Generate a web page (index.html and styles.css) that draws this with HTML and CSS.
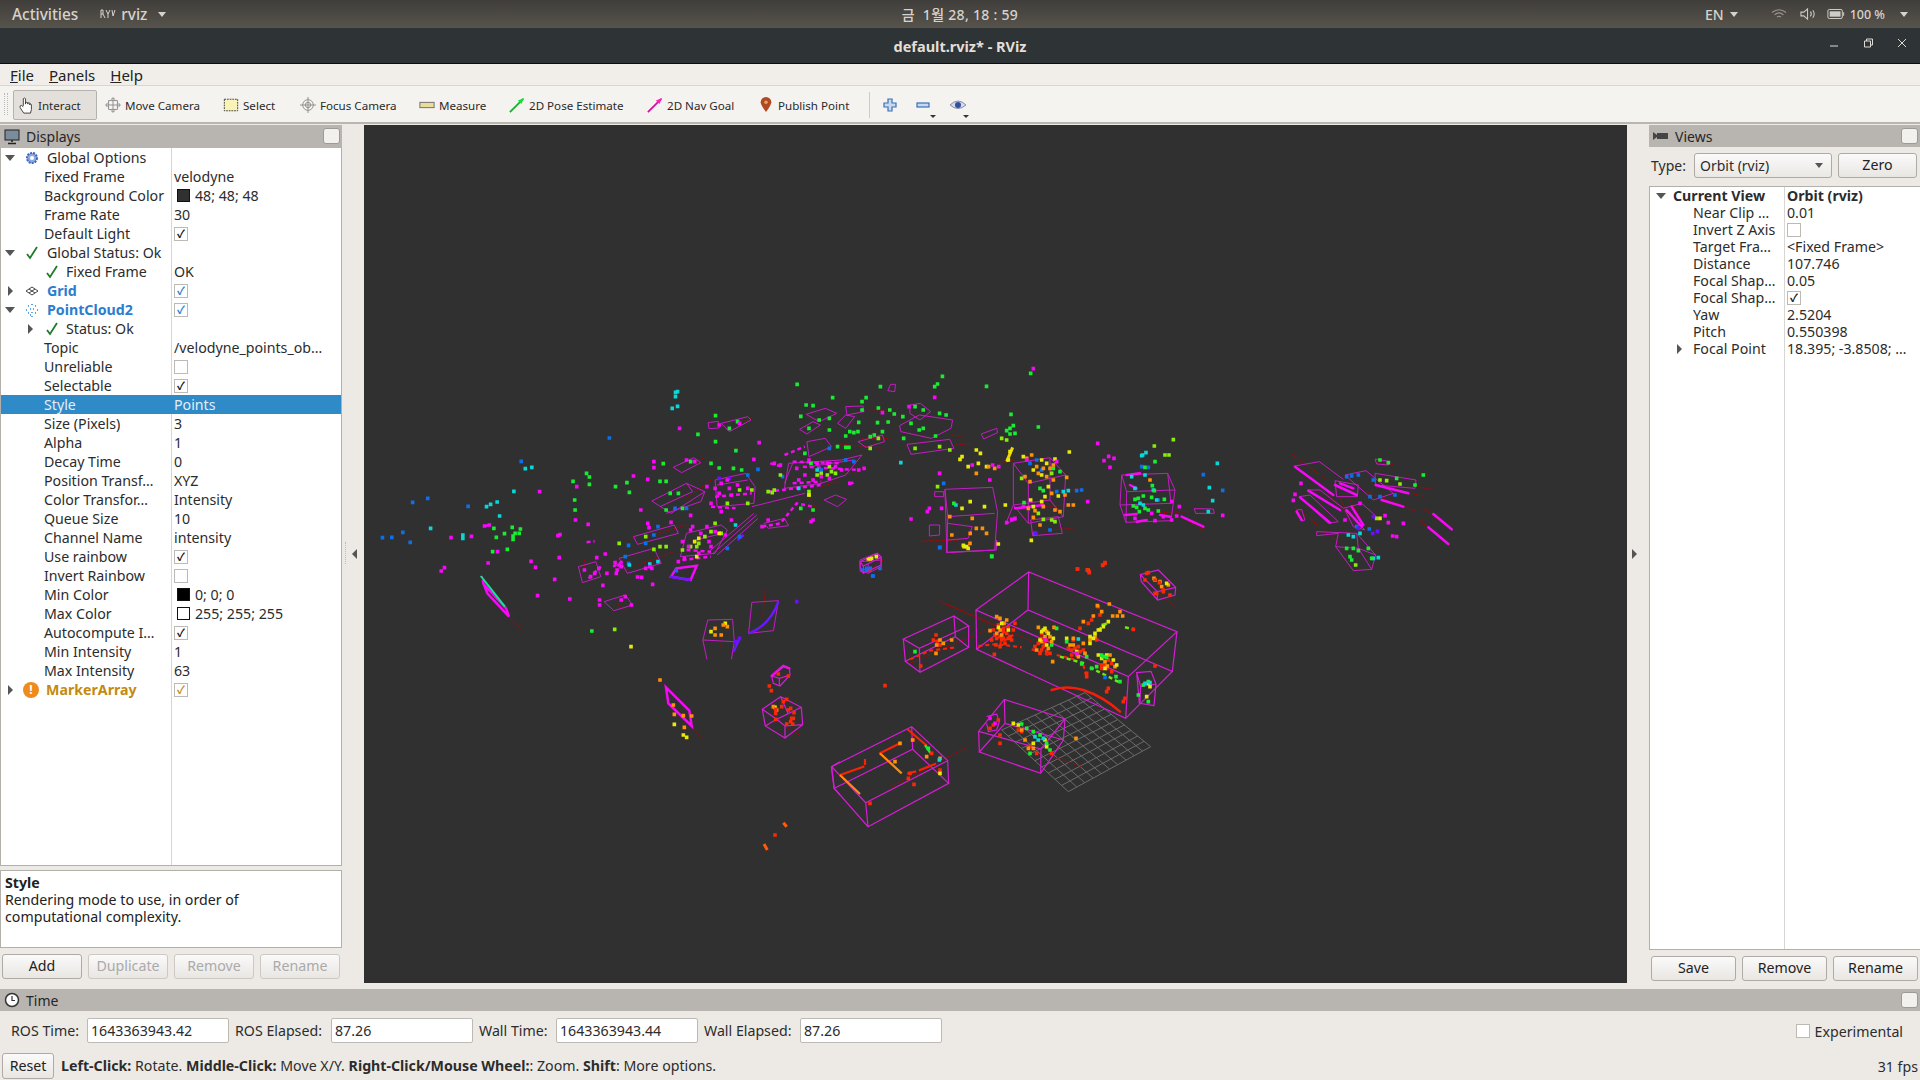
FILE: index.html
```html
<!DOCTYPE html>
<html lang="en">
<head>
<meta charset="utf-8">
<title>default.rviz* - RViz</title>
<link rel="stylesheet" href="styles.css">
</head>
<body>
<div class="screen">
  <header class="topbar">
    <div class="top-left"><span class="act">Activities</span><span class="app"><svg class="app-ico" viewBox="0 0 16 10"><path d="M1 1v8M1 1h2v4H1M3 5l2 4M6 1l2 4 2-4M8 5v4M12 1l1 6 2-6" /></svg>rviz<i class="caret"></i></span></div>
    <div class="clock">금 &nbsp;1월 28, 18 : 59</div>
    <div class="top-right">
      <span class="lang">EN<i class="caret"></i></span>
      <svg class="tray wifi" viewBox="0 0 16 12"><path d="M1 4.500Q8-1 15 4.500M3.500 6.800Q8 3 12.500 6.800M6 9Q8 7.500 10 9"/></svg>
      <svg class="tray vol" viewBox="0 0 18 14"><path d="M1 5h3l4-3.500v11L4 9H1zM11 4.500q2 2.500 0 5M13.500 3q3 4 0 8"/></svg>
      <svg class="tray bat" viewBox="0 0 20 12"><rect x="1" y="1" width="16" height="10" rx="1.500"/><rect class="bat-fill" x="3" y="3" width="12" height="6"/><path d="M18.500 4v4"/></svg>
      <span class="pct">100 %</span><i class="caret"></i>
    </div>
  </header>
  <div class="titlebar">
    <span>default.rviz* - RViz</span>
    <div class="win-btns">
      <svg viewBox="0 0 12 12"><path d="M2 9h8"/></svg>
      <svg viewBox="0 0 12 12"><path d="M2.500 4h6v6h-6zM4.500 4V2h6v6H8.500"/></svg>
      <svg viewBox="0 0 12 12"><path d="M2 2l8 8M10 2l-8 8"/></svg>
    </div>
  </div>
  <nav class="menubar"><span><u>F</u>ile</span><span><u>P</u>anels</span><span><u>H</u>elp</span></nav>
  <div class="toolbar">
    <div class="grip"></div>
    <div class="tools">
      <div class="tool active"><svg viewBox="0 0 16 20"><path class="ln" d="M5 11V3q1.300-1.500 2.500 0v6-1.500q1.300-1 2.500 0V9 8q1.200-.8 2.300 0v2-1q1-.5 1.700.5V15l-1 4H5.500L1.500 13v-2q1.500-1.500 3.500 1"/></svg><span>Interact</span></div>
      <div class="tool"><svg viewBox="0 0 18 18"><path class="ln2" d="M9 1v16M1 9h16M4 4h10v10H4zM6.500 3L9 .800 11.500 3M6.500 15L9 17.200 11.500 15M3 6.500L.800 9 3 11.500M15 6.500L17.200 9 15 11.500"/></svg><span>Move Camera</span></div>
      <div class="tool"><svg viewBox="0 0 18 18"><rect class="sel" x="1.500" y="2.500" width="15" height="13"/></svg><span>Select</span></div>
      <div class="tool"><svg viewBox="0 0 18 18"><circle class="ln2" cx="9" cy="9" r="6"/><circle class="ln2" cx="9" cy="9" r="3"/><path class="ln2" d="M9 0v18M0 9h18"/></svg><span>Focus Camera</span></div>
      <div class="tool"><svg viewBox="0 0 18 18"><rect class="ruler" x="1" y="6" width="16" height="6"/></svg><span>Measure</span></div>
      <div class="tool"><svg viewBox="0 0 18 18"><path class="arrow-g" d="M1 17L16 2"/><path class="tip-g" d="M17 1l-7 3 4 4z"/></svg><span>2D Pose Estimate</span></div>
      <div class="tool"><svg viewBox="0 0 18 18"><path class="arrow-m" d="M1 17L16 2"/><path class="tip-m" d="M17 1l-7 3 4 4z"/></svg><span>2D Nav Goal</span></div>
      <div class="tool"><svg viewBox="0 0 18 18"><path class="pin" d="M9 17Q3 9 3 6a6 6 0 0 1 12 0q0 3-6 11z"/><circle class="pin-dot" cx="9" cy="6" r="2"/></svg><span>Publish Point</span></div>
      <div class="tool-sep"></div>
      <div class="tool-ico"><svg viewBox="0 0 14 14"><path class="plus" d="M5 1h4v4h4v4H9v4H5V9H1V5h4z"/></svg></div>
      <div class="tool-ico"><svg viewBox="0 0 14 14"><rect class="plus" x="1" y="5" width="12" height="4"/></svg><i class="mini"></i></div>
      <div class="tool-ico"><svg class="eye-ico" viewBox="0 0 18 14"><path class="eye" d="M1 7q8-8 16 0-8 7-16 0z"/><circle class="pupil" cx="9" cy="7" r="3"/></svg><i class="mini"></i></div>
    </div>
  </div>

  <main class="workspace">
    <section class="left">
      <div class="dock-title"><svg class="dock-ico" viewBox="0 0 16 16"><rect class="mon" x="1" y="1" width="14" height="10"/><path class="mon-b" d="M8 11v2M4 14.500h8"/></svg><span>Displays</span><i class="dock-btn"></i></div>
      <div class="tree">
        <div class="row"><div class="name n0"><i class="tri down"></i><svg class="ico" viewBox="0 0 14 14"><circle class="gear" cx="7" cy="7" r="5"/><circle class="gear-in" cx="7" cy="7" r="2"/></svg>Global Options</div><div class="val"></div></div>
        <div class="row"><div class="name n1">Fixed Frame</div><div class="val">velodyne</div></div>
        <div class="row"><div class="name n1">Background Color</div><div class="val"><i class="swatch bg48"></i>48; 48; 48</div></div>
        <div class="row"><div class="name n1">Frame Rate</div><div class="val">30</div></div>
        <div class="row"><div class="name n1">Default Light</div><div class="val"><i class="cb on">✓</i></div></div>
        <div class="row"><div class="name n0"><i class="tri down"></i><svg class="ico" viewBox="0 0 14 14"><path class="chk" d="M2 8l3 4 7-11"/></svg>Global Status: Ok</div><div class="val"></div></div>
        <div class="row"><div class="name n2"><svg class="ico" viewBox="0 0 14 14"><path class="chk" d="M2 8l3 4 7-11"/></svg>Fixed Frame</div><div class="val">OK</div></div>
        <div class="row"><div class="name n0 blue"><i class="tri right"></i><svg class="ico" viewBox="0 0 14 14"><path class="griddia" d="M7 3l6 4-6 4-6-4zM4 5l6 4M10 5l-6 4"/></svg>Grid</div><div class="val"><i class="cb on tint">✓</i></div></div>
        <div class="row"><div class="name n0 blue"><i class="tri down"></i><svg class="ico" viewBox="0 0 14 14"><path class="cloud" d="M7 1v1M3 3h1M10 3h1M1 7h1M5 6h1M8 6h1M12 7h1M3 10h1M7 9v1M10 10h1M5 12h1M7 13v1"/></svg>PointCloud2</div><div class="val"><i class="cb on tint">✓</i></div></div>
        <div class="row"><div class="name n2 sub"><i class="tri right"></i><svg class="ico" viewBox="0 0 14 14"><path class="chk" d="M2 8l3 4 7-11"/></svg>Status: Ok</div><div class="val"></div></div>
        <div class="row"><div class="name n1">Topic</div><div class="val">/velodyne_points_ob…</div></div>
        <div class="row"><div class="name n1">Unreliable</div><div class="val"><i class="cb"></i></div></div>
        <div class="row"><div class="name n1">Selectable</div><div class="val"><i class="cb on">✓</i></div></div>
        <div class="row selected"><div class="name n1">Style</div><div class="val">Points</div></div>
        <div class="row"><div class="name n1">Size (Pixels)</div><div class="val">3</div></div>
        <div class="row"><div class="name n1">Alpha</div><div class="val">1</div></div>
        <div class="row"><div class="name n1">Decay Time</div><div class="val">0</div></div>
        <div class="row"><div class="name n1">Position Transf…</div><div class="val">XYZ</div></div>
        <div class="row"><div class="name n1">Color Transfor…</div><div class="val">Intensity</div></div>
        <div class="row"><div class="name n1">Queue Size</div><div class="val">10</div></div>
        <div class="row"><div class="name n1">Channel Name</div><div class="val">intensity</div></div>
        <div class="row"><div class="name n1">Use rainbow</div><div class="val"><i class="cb on">✓</i></div></div>
        <div class="row"><div class="name n1">Invert Rainbow</div><div class="val"><i class="cb"></i></div></div>
        <div class="row"><div class="name n1">Min Color</div><div class="val"><i class="swatch black"></i>0; 0; 0</div></div>
        <div class="row"><div class="name n1">Max Color</div><div class="val"><i class="swatch white"></i>255; 255; 255</div></div>
        <div class="row"><div class="name n1">Autocompute I…</div><div class="val"><i class="cb on">✓</i></div></div>
        <div class="row"><div class="name n1">Min Intensity</div><div class="val">1</div></div>
        <div class="row"><div class="name n1">Max Intensity</div><div class="val">63</div></div>
        <div class="row"><div class="name n0 amber"><i class="tri right"></i><i class="warn">!</i>MarkerArray</div><div class="val"><i class="cb on warn-c">✓</i></div></div>
      </div>
      <div class="desc"><b>Style</b><br>Rendering mode to use, in order of<br>computational complexity.</div>
      <div class="btn-row left-btns"><button class="btn">Add</button><button class="btn off">Duplicate</button><button class="btn off">Remove</button><button class="btn off">Rename</button></div>
    </section>

    <div class="split"><i class="split-dots"></i><i class="tri left-t"></i></div>

    <section class="render">
      <svg class="scene" viewBox="364 125 1263 858" preserveAspectRatio="none">
        <g transform="translate(800 540) scale(.33333)">
          <path class="gridln" d="M605 570L805 755M630 559L830 741M655 548L854 728M680 536L879 714M705 525L904 701M730 514L928 687M755 503L953 674M780 492L978 660M805 480L1003 647M830 469L1027 633M855 458L1052 620M605 570L855 458M625 588L875 474M645 607L894 490M665 625L914 507M685 644L934 523M705 662L953 539M725 681L973 555M745 699L993 571M765 718L1013 588M785 736L1032 604M805 755L1052 620"/>
          <path class="dk" d="M418 182L700 305M555 272L330 370M495 625L275 740M745 645L845 680M1075 160L1125 200M360 5L480 0M250 60L200 95"/>
          <path class="bx" d="M528 210L686 96L1131 275L985 410ZM530 328L684 210L1117 394L977 535ZM528 210L530 328M686 96L684 210M1131 275L1117 394M985 410L977 535"/>
          <path class="bx" d="M310 297L462 228L506 258L358 325ZM316 364L466 290L506 322L360 397ZM310 297L316 364M462 228L466 290M506 258L506 322M358 325L360 397"/>
          <path class="bx" d="M95 680L335 560L443 662L197 788ZM103 745L338 628L446 730L204 860ZM95 680L103 745M335 560L338 628M443 662L446 730M197 788L204 860"/>
          <path class="bx" d="M536 574L613 478L795 537L723 627ZM538 636L615 550L790 600L722 700ZM536 574L538 636M613 478L615 550M795 537L790 600M723 627L722 700"/>
          <path class="bx" d="M1010 398L1053 394L1068 432L1062 497L1018 490ZM1010 398L1022 440L1068 432M1022 440L1020 490"/>
          <path class="bx" d="M1021 104L1075 90L1127 142L1125 165L1073 180L1024 125ZM1021 104L1072 155L1127 142M1072 155V180"/>
          <path class="bx" d="M180 65L232 40L244 52L243 75L190 100L182 90ZM180 65L190 78L244 52M190 78V100"/>
          <path class="bx" d="M440 0L440 37L588 30L590 0M560 530L590 522L598 545L590 570L565 575L560 550"/>
          <path class="rl" d="M755 450Q800 435 850 450Q910 470 960 515"/>
          <path class="st-r" d="M120 705L190 680M240 640L300 610M325 570L378 615M360 690L405 672M325 700L345 695M195 660V672"/>
          <path class="st-o" d="M120 705L180 762M240 640L305 700"/>
          <path class="st-g" d="M375 615L392 640"/>
          <path class="st-r dash" d="M535 318L590 312L665 322M695 328L745 345M330 358L390 332L470 322M850 375L860 412M640 285L600 310M770 345L830 360"/>
          <path class="st-l dash" d="M780 350L860 372M870 382L960 428M975 262L1002 268M905 255L925 250M895 270L920 250"/>
          <path class="pt r" d="M595 255h0M610 265h0M620 280h0M590 295h0M605 300h0M630 290h0M615 310h0M640 270h0M580 270h0M575 300h0M600 320h0M635 300h0M645 250h0M625 262h0M588 315h0M583 343h0M408 285h0M412 305h0M400 300h0M420 315h0M362 378h0M255 437h0M833 87h0M867 95h0M908 75h0M915 70h0M342 733h0M210 790h0M580 555h0M595 540h0M570 565h0M600 585h0M600 610h0M655 570h0M665 575h0M690 620h0M710 640h0M755 640h0M925 445h0M920 455h0M975 475h0M970 485h0M1000 268h0M1065 378h0M1045 98h0M1090 155h0M1070 160h0M210 90h0M725 280h0M740 300h0M730 320h0M750 340h0M720 340h0M715 310h0M705 320h0M835 320h0M815 330h0M830 345h0M850 330h0M820 300h0M840 265h0M865 250h0M875 240h0M895 200h0M900 225h0M890 300h0M925 360h0M905 375h0M935 395h0M395 640h0M420 690h0M338 600h0M325 715h0M330 700h0M860 400h0M860 410h0M610 275h0M600 290h0M625 295h0M585 285h0M610 295h0M725 295h0M735 310h0M725 330h0M740 335h0M805 325h0M825 325h0M840 335h0M815 345h0M905 385h0M920 385h0M915 375h0M935 370h0"/>
          <path class="pt o" d="M600 235h0M590 230h0M612 250h0M620 240h0M570 272h0M605 285h0M430 310h0M410 315h0M420 300h0M455 300h0M408 340h0M715 262h0M735 290h0M755 305h0M745 325h0M725 305h0M762 262h0M710 330h0M758 365h0M810 315h0M820 295h0M835 350h0M855 340h0M850 245h0M880 228h0M928 192h0M892 197h0M905 215h0M938 228h0M952 228h0M968 228h0M960 215h0M922 378h0M945 380h0M915 365h0M930 345h0M338 600h0M420 655h0M380 650h0M828 595h0M665 570h0M675 600h0M685 625h0M700 625h0M510 10h0M863 90h0M1062 115h0M1085 140h0M1105 135h0M1080 125h0M285 665h0M300 610h0M600 270h0M590 280h0M740 275h0M750 290h0M850 310h0M870 300h0M885 290h0M820 315h0"/>
          <path class="pt y" d="M605 250h0M595 262h0M625 270h0M730 270h0M745 280h0M720 300h0M760 295h0M800 295h0M830 335h0M870 290h0M885 280h0M900 270h0M910 260h0M925 245h0M870 310h0M895 345h0M920 345h0M915 385h0M950 375h0M940 360h0M420 700h0M1045 430h0M1050 440h0M1040 470h0M1065 120h0M1100 130h0M500 20h0M490 16h0M595 12h0M205 58h0M215 55h0M700 610h0M735 600h0M740 620h0M640 550h0M655 555h0M735 265h0M725 275h0M740 315h0M895 270h0M880 295h0M905 355h0"/>
          <path class="pt g" d="M755 315h0M770 265h0M345 335h0M575 48h0M845 372h0M905 345h0M920 352h0M960 425h0M948 410h0M1045 425h0M1030 435h0M1015 465h0M1045 485h0M385 625h0M665 552h0M680 565h0M720 585h0M750 630h0M690 640h0M800 305h0M860 350h0M890 380h0M875 385h0M910 350h0M740 610h0M700 575h0"/>
          <path class="pt c" d="M835 297h0M418 660h0M705 590h0M1035 430h0M1050 428h0M730 595h0M715 600h0"/>
          <path class="pt b" d="M420 22h0M218 108h0M185 90h0M200 85h0M240 85h0M915 412h0"/>
          <path class="pt m" d="M570 535h0M585 550h0M735 300h0M830 340h0"/>
        </g>
        <g transform="translate(360 360) scale(.40816 .33333)">
          <path class="dk" d="M365 770L394 806M840 295L820 310M960 175L925 190M860 360L800 415M800 495L700 530M770 575L680 615M550 600V620M630 730L655 755M993 688L987 770M885 840L885 875M1430 730L1560 800M1380 543L1495 538M1160 250L1280 265M1230 235L1300 235M1450 225L1478 230M1460 255L1498 250M1190 340L1225 340M1130 380L1170 365M1250 150L1300 150M1100 415L1120 450M1050 490L1070 490"/>
          <path class="bx2" d="M715 423L800 370L845 395L762 460ZM735 440L815 395M800 370L815 395M845 395L835 425L750 460M767 322L818 293L835 308L788 338ZM885 190L950 170L958 180L905 215ZM853 188L878 184L880 204L855 206ZM1093 163L1140 145L1168 160L1125 185ZM1077 208L1110 185L1128 195L1095 222ZM1190 140L1232 138L1235 155L1193 165ZM1170 190L1190 165L1212 170L1190 205ZM1322 197L1370 165L1452 180L1448 205L1400 235L1325 215ZM1348 135L1373 130L1398 155L1372 180L1347 160ZM1340 253L1445 238L1455 265L1350 283ZM1522 222L1560 205L1562 218L1528 237ZM1300 73L1312 73L1310 95L1293 92ZM870 360L945 340L968 380L965 430L875 440ZM1050 310L1180 300L1230 285L1190 345L1130 370L1040 385ZM1095 245L1140 235L1155 260L1100 290ZM1220 245L1280 225L1285 245L1240 262ZM1137 420L1165 405L1192 418L1170 440ZM990 490L1040 475L1050 497L1000 505ZM670 530L770 495L780 520L680 553ZM635 595L720 565L738 610L655 640ZM800 520L885 495L900 510L870 580L785 590ZM820 540L890 520M855 575L965 460M865 580L972 465M875 585L975 475M535 620L578 605L590 650L545 668ZM598 725L650 705L668 735L622 752ZM960 727L1025 722L1013 812L952 820ZM852 780L913 778L917 845L840 840ZM840 840L850 898M917 845L910 898M1225 600L1265 580L1277 600L1277 620L1245 640L1225 630ZM1225 605L1277 600M1245 610V640M1433 388L1550 382L1562 455L1555 570L1438 578ZM1433 388L1440 470L1555 460M1440 470L1438 578M1395 495L1420 495L1420 525L1395 528ZM1408 395L1430 395L1430 410L1408 410ZM1440 490L1500 500L1490 535L1440 540M875 375L950 360M1100 320L1210 300M960 440L1090 400M1060 310L1040 370"/>
          <path class="th dash" d="M303 672L298 650M1000 395L1130 375M870 410L960 400M860 440L920 445M1060 370L1130 365M1060 305L1180 310M1085 320L1220 330M1040 285L1090 260M985 500L1030 490L1070 430L1110 440M620 620L650 600M560 655L590 620M800 570L860 575M790 600L860 590M1005 310L1035 320M1200 372L1212 366M555 547L575 544M305 498L320 495"/>
          <path class="th" d="M303 672L358 745L365 770L312 700L303 672M762 650L775 625L825 617L810 660Z"/>
          <path class="st-t" d="M296 648L355 740"/>
          <path class="st-i" d="M953 820Q1005 795 1025 725M915 875L930 835M760 650L810 660M925 540L940 525"/>
          <path class="pt b" d="M55 533h0M78 532h0M105 517h0M123 547h0M129 427h0M166 415h0M265 439h0M395 304h0M611 234h0M650 590h0M658 610h0M658 556h0M700 550h0M775 632h0M772 445h0M800 445h0M1150 265h0M1035 350h0M975 328h0M950 345h0M1130 330h0M1190 300h0M1210 305h0M1250 625h0M1240 630h0M1257 648h0M900 565h0M930 530h0M720 525h0M1420 563h0M1430 370h0M730 500h0"/>
          <path class="pt c" d="M173 505h0M252 525h0M252 535h0M310 440h0M320 433h0M336 426h0M342 468h0M405 326h0M421 322h0M377 394h0M773 97h0M778 95h0M773 110h0M765 145h0M778 139h0M1325 308h0M730 605h0M660 615h0M710 612h0M920 495h0M1075 385h0M1120 330h0M1460 435h0"/>
          <path class="pt g" d="M328 505h0M373 502h0M393 507h0M354 521h0M380 520h0M390 520h0M375 528h0M375 538h0M334 532h0M325 575h0M361 568h0M522 364h0M555 340h0M562 351h0M562 373h0M626 380h0M654 368h0M660 397h0M526 420h0M527 450h0M743 311h0M735 364h0M750 364h0M860 310h0M880 324h0M828 223h0M871 167h0M871 245h0M921 272h0M1071 73h0M1158 113h0M1080 169h0M1093 135h0M1110 137h0M1240 113h0M1275 80h0M1427 49h0M1415 72h0M1408 80h0M1535 79h0M1270 144h0M1298 150h0M1309 162h0M1222 187h0M1268 188h0M1294 186h0M1280 215h0M1250 230h0M1260 225h0M1190 228h0M1200 215h0M1210 218h0M1220 215h0M1170 260h0M1190 262h0M1198 262h0M1230 150h0M1230 125h0M1150 175h0M1125 180h0M1100 205h0M1150 210h0M1330 170h0M1332 235h0M1350 190h0M1370 210h0M1380 205h0M1420 160h0M1410 228h0M1436 165h0M1360 140h0M1380 150h0M915 325h0M935 330h0M1090 280h0M1105 310h0M760 400h0M780 400h0M790 445h0M750 450h0M810 305h0M925 185h0M905 205h0M568 813h0M1548 590h0M1455 430h0M1080 445h0M1110 450h0"/>
          <path class="pt l" d="M635 550h0M720 568h0M735 560h0M750 560h0M700 530h0M790 570h0M830 550h0M825 560h0M870 490h0M885 520h0M1030 345h0M1000 395h0M1015 390h0M1100 405h0M1130 340h0M1145 345h0M1165 340h0M1250 265h0M1270 235h0M1415 380h0M1360 265h0M1420 260h0M1445 270h0M624 808h0M900 430h0M950 430h0M930 390h0M960 390h0M1120 345h0M1155 335h0M1010 398h0M1100 395h0M1150 320h0M845 530h0M810 560h0M860 515h0"/>
          <path class="pt y" d="M664 860h0M1475 290h0M1470 298h0M1510 270h0M1520 280h0M1490 320h0M1515 310h0M1535 320h0M1495 425h0M1475 445h0M1530 440h0M1480 560h0M1490 565h0M1250 597h0M1265 590h0M880 520h0M830 535h0M825 590h0M820 545h0M1100 405h0M860 815h0M895 790h0"/>
          <path class="pt o" d="M870 805h0M890 795h0M900 800h0M885 825h0M870 825h0M1500 475h0M1510 505h0M1525 505h0M1535 520h0M1495 520h0M1450 525h0M1445 470h0M1540 320h0M1510 340h0M1555 325h0"/>
          <path class="pt i" d="M920 845h0M930 835h0M1070 725h0M1420 340h0M880 355h0M905 355h0"/>
          <path class="pt m" d="M223 533h0M273 529h0M305 498h0M317 495h0M337 575h0M314 609h0M207 623h0M199 633h0M419 604h0M430 622h0M488 593h0M485 527h0M490 524h0M559 493h0M528 480h0M440 395h0M531 380h0M670 348h0M705 358h0M720 305h0M720 323h0M783 205h0M978 248h0M965 298h0M477 658h0M435 707h0M514 717h0M595 676h0M587 720h0M587 735h0M717 673h0M601 582h0M580 593h0M680 651h0M690 652h0M688 450h0M810 466h0M705 490h0M708 503h0M762 487h0M650 710h0M665 735h0M640 720h0M550 630h0M585 625h0M605 640h0M628 640h0M625 608h0M635 615h0M1015 310h0M1030 315h0M1105 485h0M1110 480h0M1200 370h0M1222 330h0M1235 325h0M1350 477h0M1390 455h0M1395 445h0M1425 445h0M1543 360h0M1420 340h0M1345 140h0M850 380h0M900 360h0M880 400h0M910 405h0M860 430h0M885 455h0M910 480h0M985 500h0M1000 480h0M1408 112h0M1280 158h0M880 195h0M930 190h0M800 300h0M820 305h0M1500 315h0M1550 315h0M1565 320h0M710 620h0M815 500h0M850 500h0M895 525h0M805 560h0M830 580h0M860 560h0M885 370h0M925 375h0M950 385h0M905 385h0M870 385h0M1070 325h0M1090 345h0M1110 360h0M1130 350h0M1075 360h0M1150 355h0M1180 330h0M1100 300h0M1120 310h0M1145 310h0M1165 320h0M810 510h0M835 520h0M870 515h0M790 545h0M855 545h0M780 605h0M795 595h0M640 620h0M630 630h0M700 625h0M715 625h0M565 650h0M575 640h0"/>
        </g>
        <g transform="translate(1000 360) scale(.33333)">
          <path class="dk" d="M868 278L975 355M980 400L1090 510M1100 395L1245 452M1230 400L1270 408M1250 380L1300 388M1270 445L1355 508M1258 480L1345 552M885 440L1020 550M1130 308L1180 315M1020 415L1050 475M1050 420L1080 470M480 458L565 455M545 470L615 515M0 310L40 300M140 510L220 505M175 395L245 385M130 440L220 435"/>
          <path class="bx2" d="M40 310L150 293L197 345L190 470L85 490L40 435ZM40 310L85 370L197 345M85 370V490M40 435L150 420L190 470M150 293V420M92 480L175 470L187 520L98 527ZM18 490L40 435M18 490L50 480M365 345L503 340L525 390L513 482L378 487L360 435ZM365 345L380 395L525 390M380 395L378 487M360 435L513 430M503 340L513 430M583 446L640 447L643 460L587 460ZM885 318L958 305L1030 358M923 390L960 390L1030 445M898 410L930 405L1015 485L985 490ZM890 450L905 448L915 480L905 483ZM1005 362L1075 375L1072 410L1010 410ZM1035 345L1098 332L1180 400L1120 420ZM1125 340L1248 360L1245 385L1127 375ZM1030 445L1085 430L1130 470M1035 450L1095 510L1060 500ZM950 515L1070 520L1127 585L1115 628L1060 632L1007 560L1015 520L950 527ZM1007 560L1075 565L1127 585M1070 520L1075 565L1115 628M1125 297L1170 305L1165 315L1130 312Z"/>
          <path class="th" d="M885 320L1000 405M925 392L1020 450M900 412L990 488M1127 375L1225 400M1145 420L1210 440M1005 375L1070 405M1020 370L1060 385M1300 462L1355 508M1285 502L1345 552M1055 440L1090 495M1040 450L1085 500M545 470L610 500M375 465L410 462M410 485L440 480M480 465L510 470M45 445L130 435M380 345L420 340M390 375L410 385M890 455L905 480"/>
          <path class="st-y" d="M20 305L38 262"/>
          <path class="pt b" d="M90 310h0M110 300h0M125 330h0M170 395h0M230 392h0M245 390h0M425 320h0M445 322h0M610 344h0M668 391h0M1040 350h0M1055 348h0M1075 345h0M1120 360h0M1140 410h0M1185 405h0M1110 410h0M1070 500h0M1108 507h0M105 520h0M150 510h0M475 420h0"/>
          <path class="pt c" d="M428 285h0M438 278h0M425 287h0M460 390h0M395 350h0M405 385h0M420 430h0M430 435h0M470 420h0M638 422h0M628 383h0M652 310h0M625 455h0M1080 520h0M1120 595h0M1135 593h0M1045 525h0M1060 530h0M190 395h0M205 392h0M435 345h0"/>
          <path class="pt g" d="M92 40h0M33 163h0M115 201h0M30 205h0M40 197h0M20 212h0M30 222h0M45 220h0M465 305h0M435 322h0M457 377h0M463 392h0M405 418h0M415 415h0M430 408h0M455 412h0M400 438h0M410 442h0M435 445h0M445 450h0M418 455h0M493 418h0M475 453h0M1270 345h0M1140 300h0M1165 308h0M1190 355h0M1245 375h0M1040 565h0M1060 565h0M1075 572h0M1050 590h0M1055 600h0M1105 565h0M1115 595h0M120 385h0M130 392h0M160 325h0M180 335h0M72 428h0"/>
          <path class="pt l" d="M520 239h0M463 258h0M495 285h0M507 285h0M5 235h0M20 240h0M65 355h0M155 340h0M155 480h0M165 485h0M130 478h0M115 460h0M1200 372h0M1140 360h0M1160 362h0M1067 615h0M1130 475h0"/>
          <path class="pt y" d="M208 276h0M94 541h0M16 435h0M30 275h0M25 300h0M70 290h0M125 300h0M165 297h0M140 310h0M100 330h0M125 345h0M145 380h0M135 410h0M92 420h0M175 408h0M125 425h0M100 440h0M1140 475h0"/>
          <path class="pt o" d="M80 295h0M95 285h0M110 320h0M130 325h0M150 325h0M160 315h0M75 350h0M115 340h0M140 350h0M160 360h0M90 365h0M200 352h0M155 400h0M130 440h0M85 445h0M105 452h0M165 450h0M100 472h0M120 495h0M180 455h0M220 435h0M205 435h0M195 405h0M450 360h0"/>
          <path class="pt r" d="M232 627h0M262 630h0M268 638h0M308 616h0M315 608h0M435 660h0M465 660h0M478 668h0M490 690h0M510 705h0M465 700h0M440 640h0"/>
          <path class="pt i" d="M1118 520h0M1132 514h0M1075 505h0M1120 470h0M108 520h0"/>
          <path class="pt m" d="M100 26h0M293 250h0M326 289h0M312 302h0M342 295h0M330 322h0M263 425h0M538 440h0M668 466h0M903 370h0M885 403h0M880 421h0M1165 488h0M1210 490h0M1178 528h0M1190 530h0M1155 467h0M1080 430h0M1035 480h0M35 478h0M45 475h0M20 488h0M80 300h0M170 305h0M515 425h0M455 460h0M465 482h0M515 480h0M530 468h0M405 475h0M490 470h0M70 440h0"/>
        </g>
        <g transform="translate(640 650) scale(.33333)">
          <path class="dk" d="M150 225L185 262M435 228L490 262M425 85L445 75"/>
          <path class="th" d="M78 112L148 182L155 228L85 160ZM395 78L430 48L448 55"/>
          <path class="bx" d="M395 78L430 48L448 55L450 75L420 108L400 100ZM395 78L418 85L450 75M418 85V108M367 178L422 140L484 172L488 224L435 264L376 228ZM367 178L410 208L484 172M410 208L435 228L488 224M435 228V264M376 228L410 208M422 140L445 192"/>
          <path class="bx" d="M574 350L600 335M574 350L582 415L600 435"/>
          <path class="st-f" d="M430 518L440 530M372 582L382 600"/>
          <path class="pt y" d="M130 255h0M140 262h0M103 223h0M405 172h0"/>
          <path class="pt o" d="M60 90h0M103 193h0M130 197h0M155 198h0M133 232h0M100 165h0M400 170h0M410 180h0"/>
          <path class="pt r" d="M388 108h0M394 122h0M415 72h0M445 78h0M407 178h0M407 190h0M430 155h0M440 148h0M425 170h0M445 180h0M452 175h0M462 188h0M455 205h0M460 205h0M452 215h0M458 222h0M407 208h0M440 222h0M405 555h0"/>
        </g>
      </svg>
    </section>

    <div class="split right-split"><i class="tri right"></i></div>

    <section class="right">
      <div class="dock-title short"><svg class="dock-ico" viewBox="0 0 16 16"><path class="cam" d="M0 4l4 3V5h11v6H4V9l-4 3z"/></svg><span>Views</span><i class="dock-btn"></i></div>
      <div class="type-row"><span class="type-lb">Type:</span><div class="combo">Orbit (rviz)<i class="caret dark"></i></div><button class="btn zero">Zero</button></div>
      <div class="tree small">
        <div class="row"><div class="name v0"><i class="tri down"></i><b>Current View</b></div><div class="val"><b>Orbit (rviz)</b></div></div>
        <div class="row"><div class="name v1">Near Clip …</div><div class="val">0.01</div></div>
        <div class="row"><div class="name v1">Invert Z Axis</div><div class="val"><i class="cb"></i></div></div>
        <div class="row"><div class="name v1">Target Fra…</div><div class="val">&lt;Fixed Frame&gt;</div></div>
        <div class="row"><div class="name v1">Distance</div><div class="val">107.746</div></div>
        <div class="row"><div class="name v1">Focal Shap…</div><div class="val">0.05</div></div>
        <div class="row"><div class="name v1">Focal Shap…</div><div class="val"><i class="cb on">✓</i></div></div>
        <div class="row"><div class="name v1">Yaw</div><div class="val">2.5204</div></div>
        <div class="row"><div class="name v1">Pitch</div><div class="val">0.550398</div></div>
        <div class="row"><div class="name v1 vexp"><i class="tri right"></i>Focal Point</div><div class="val">18.395; -3.8508; …</div></div>
      </div>
      <div class="btn-row right-btns"><button class="btn">Save</button><button class="btn">Remove</button><button class="btn">Rename</button></div>
    </section>
  </main>

  <div class="dock-title time-title"><svg class="dock-ico" viewBox="0 0 16 16"><circle class="clk" cx="8" cy="8" r="6.500"/><path class="clk-h" d="M8 4v4.500h3"/></svg><span>Time</span><i class="dock-btn"></i></div>
  <div class="time-row">
    <label>ROS Time:</label><div class="field">1643363943.42</div>
    <label>ROS Elapsed:</label><div class="field">87.26</div>
    <label>Wall Time:</label><div class="field">1643363943.44</div>
    <label>Wall Elapsed:</label><div class="field">87.26</div>
    <div class="exp"><i class="cb"></i>Experimental</div>
  </div>
  <div class="status">
    <button class="btn reset">Reset</button>
    <div class="help"><b>Left-Click:</b> Rotate. <b>Middle-Click:</b> Move X/Y. <b>Right-Click/Mouse Wheel:</b>: Zoom. <b>Shift</b>: More options.</div>
    <div class="fps">31 fps</div>
  </div>
</div>
</body>
</html>
```
FILE: styles.css
```css
*{box-sizing:border-box}
html,body{margin:0;height:100%;overflow:hidden}
body{font:14px "Noto Sans","Noto Sans CJK KR",sans-serif;color:#2c2c2c;background:#edeae5}
i{font-style:normal;display:block;flex:none}
button{font:inherit}
.screen{width:1920px;height:1080px;display:flex;flex-direction:column}

/* top bar */
.topbar{height:28px;flex:none;background:linear-gradient(#403e3b,#57534c);color:#d6d3cd;display:grid;grid-template-columns:1fr auto 1fr;align-items:center;padding:0 12px;font-weight:500;font-size:15.400px}
.top-left{display:flex;gap:22px;align-items:center}
.app{display:flex;align-items:center;gap:5px}
.app-ico{width:16px;height:10px;fill:none;stroke:#d6d3cd;stroke-width:1}
.caret{width:0;height:0;border:4.500px solid transparent;border-top:5px solid #d6d3cd;border-bottom:0;margin-left:6px}
.caret.dark{border-top-color:#555;margin-left:auto}
.clock{font-size:14px;font-weight:500;letter-spacing:.3px}
.top-right{display:flex;align-items:center;justify-content:flex-end;font-size:12.500px}
.lang{display:flex;align-items:center;font-size:14px;margin-right:33px}
.tray{fill:none;stroke:#cfccc6;stroke-width:1.100}
.wifi{width:16px;height:12px;margin-right:13px;stroke:#9a978f}
.vol{width:17px;height:14px;margin-right:10px}
.bat{width:18px;height:12px;margin-right:5px}
.bat-fill{fill:#cfccc6;stroke:none}
.pct{margin-right:9px}

/* title */
.titlebar{height:36px;flex:none;background:#2e3336;border-bottom:1px solid #0c0d0d;color:#e3dfd7;font-weight:700;font-size:14.500px;display:flex;align-items:center;justify-content:center;position:relative}
.win-btns{position:absolute;right:12px;top:9px;display:flex;gap:22px}
.win-btns svg{width:12px;height:12px;fill:none;stroke:#dedbd5;stroke-width:1}

/* menu */
.menubar{height:22px;flex:none;background:#f1eeea;border-bottom:1px solid #d9d5cf;display:flex;gap:15px;align-items:center;padding:0 10px;font-size:15px;color:#222}
.toolbar{height:38px;flex:none;background:#f5f3ef;border-bottom:2px solid #b9b6b1;display:flex;align-items:center;padding-left:4px;position:relative}
.grip{width:4px;height:22px;border-left:1px dotted #bbb;border-right:1px dotted #bbb;margin-right:5px}
.tools{display:grid;grid-template-columns:87px 118px 77px 119px 90px 138px 111px 116px 14px 33px 33px 30px;align-items:center;height:30px;margin-top:2px}
.tool{display:flex;align-items:center;gap:3px;height:30px;padding-left:4px;font-size:11.600px;color:#2a2a2a;border:1px solid transparent;white-space:nowrap}
.tool svg{width:16px;height:18px;flex:none;margin-right:1px}
.tool.active{width:84px;background:#e3e0db;border:1px solid #b5b2ac;border-radius:2px}
.tool-sep{width:1px;height:26px;background:#cfccc6}
.tool-ico{display:flex;align-items:center;position:relative;height:26px}
.tool-ico svg{width:14px;height:14px}
.tool-ico svg.eye-ico{width:18px}
.mini{position:absolute;left:14px;bottom:0;border:3px solid transparent;border-top:3px solid #333;border-bottom:0}
.ln{fill:#fff;stroke:#333;stroke-width:1}
.ln2{fill:none;stroke:#888;stroke-width:1}
.sel{fill:#f9f3b8;stroke:#333;stroke-width:1;stroke-dasharray:2 1}
.ruler{fill:#e8dd9c;stroke:#666;stroke-width:1}
.arrow-g{stroke:#18b030;stroke-width:2}.tip-g{fill:#16e038}
.arrow-m{stroke:#d010a0;stroke-width:2}.tip-m{fill:#ff20c0}
.pin{fill:#b04a20}.pin-dot{fill:#e8a070}
.plus{fill:#c8d8ee;stroke:#3a70b8;stroke-width:1.200}
.eye{fill:#d8dce8;stroke:#8890a8;stroke-width:1}.pupil{fill:#3050a0}

/* workspace */
.workspace{height:864px;flex:none;margin-top:1px;display:grid;grid-template-columns:342px 22px 1263px 22px 271px}
.left,.right{display:flex;flex-direction:column;min-width:0}
.dock-title{height:23px;flex:none;background:#b8b4af;display:flex;align-items:center;font-size:14px;color:#262626;padding-left:4px;position:relative}
.dock-title.short{height:22px}
.dock-ico{width:16px;height:16px;margin-right:6px;flex:none}
.mon{fill:#7b8c9c;stroke:#222}.mon-b{fill:none;stroke:#222;stroke-width:1.500}
.cam{fill:#444}
.clk{fill:#fff;stroke:#333;stroke-width:1.500}.clk-h{fill:none;stroke:#333;stroke-width:1.200}
.dock-btn{position:absolute;right:2px;top:3px;width:17px;height:16px;background:#f3f1ee;border:1px solid #9d9a96;border-radius:3px}

.tree{height:718px;flex:none;background:linear-gradient(#d8d6d2,#d8d6d2) 170px 0/1px 100% no-repeat #fff;border:solid #b3b0ab;border-width:0 1px 1px 1px}
.row{display:grid;grid-template-columns:170px 1fr;height:19px;line-height:19px;font-size:14.200px;white-space:nowrap}
.name{display:flex;align-items:center;position:relative;min-width:0}
.val{padding-left:3px;display:flex;align-items:center;min-width:0;overflow:hidden}
.n1{padding-left:43px}
.n0{padding-left:4px}
.n2{padding-left:44px}
.n2.sub{padding-left:24px}
.tri{width:0;height:0;flex:none}
.tri.down{border:5px solid transparent;border-top:6px solid #555;border-bottom:0}
.tri.right{border:5px solid transparent;border-left:5px solid #555;border-right:0}
.n0 .tri{margin-right:10px}
.n0 .tri.right{margin-right:12px;margin-left:3px}
.n2.sub .tri{margin-left:3px;margin-right:12px}
.ico{width:14px;height:14px;flex:none;margin-right:8px}
.n2 .ico{margin-right:7px}
.gear{fill:#8fa8e0;stroke:#3a66c0;stroke-width:2;stroke-dasharray:2 1}.gear-in{fill:#fff}
.chk{fill:none;stroke:#1f7a2a;stroke-width:1.800}
.griddia{fill:none;stroke:#444;stroke-width:1}
.cloud{fill:none;stroke:#2a86e0;stroke-width:1.500}
.blue{color:#2a7ed0;font-weight:700}
.amber{color:#c48a10;font-weight:700}
.warn{width:16px;height:16px;border-radius:50%;background:#ef8a1c;color:#fff;font-size:12px;line-height:16px;text-align:center;font-weight:700;margin-right:7px;margin-left:-2px}
.cb{width:14px;height:14px;border:1px solid #bdbab5;background:#fff;color:#111;font-size:11px;line-height:12px;text-align:center;font-weight:700}
.cb.tint{color:#2a7ed0}
.cb.warn-c{color:#c48a10}
.swatch{width:13px;height:13px;border:1px solid #111;margin:0 5px 0 3px}
.bg48{background:#303030}.black{background:#000}.white{background:#fff}
.selected{background:#2f8ac8;color:#e4eef6}

.desc{height:78px;flex:none;margin-top:4px;background:#fff;border:1px solid #b3b0ab;padding:3px 4px;font-size:14.200px;line-height:17px;color:#222}
.btn-row{display:flex;flex:none}
.left-btns{margin:6px 0 0 2px;gap:6px}
.left-btns .btn{width:80px;height:25px}
.btn{background:linear-gradient(#fafafa,#e9e6e2);border:1px solid #aeaba6;border-radius:3px;color:#222;font-size:14.200px;padding:0;line-height:1}
.btn.off{color:#aaa;border-color:#ccc9c4}

.split{position:relative;display:flex;align-items:center;justify-content:flex-start;padding-bottom:6px}
.tri.left-t{border:5px solid transparent;border-right:5px solid #555;border-left:0;margin-left:10px}
.split-dots{width:2px;height:22px;border-left:1px dotted #bbb;position:absolute;left:3px;top:417px}
.right-split .tri{margin-left:5px}

.render{height:858px;background:#303030;overflow:hidden}
.scene{display:block;width:1263px;height:858px}
.scene path{fill:none;vector-effect:non-scaling-stroke}
.gridln{stroke:#6b6b6b;stroke-width:1}
.bx{stroke:#d61cd6;stroke-width:1.200}
.bx2{stroke:#c41cc4;stroke-width:1}
.th{stroke:#f808f8;stroke-width:2.500;stroke-linecap:round}
.dk{stroke:#a30808;stroke-width:1;stroke-dasharray:2 1}
.rl{stroke:#f51d0b;stroke-width:2.500;stroke-linecap:round}
.st-r{stroke:#f72208;stroke-width:2.200;stroke-linecap:square}
.st-o{stroke:#ff8c08;stroke-width:2.200}
.st-f{stroke:#ff5a08;stroke-width:3}
.st-g{stroke:#28e030;stroke-width:2.500}
.st-l{stroke:#70e810;stroke-width:2.500}
.st-t{stroke:#10e888;stroke-width:2}
.st-i{stroke:#6a18ff;stroke-width:2.500}
.st-y{stroke:#f0d800;stroke-width:3}
.dash{stroke-dasharray:4 3;stroke-linecap:butt}
.pt{stroke-width:3.600;stroke-linecap:square}
.m{stroke:#fa06fa}.g{stroke:#18ee30}.c{stroke:#08d8d8}.b{stroke:#0a70ee}.y{stroke:#e8ea08}.l{stroke:#88ee08}.o{stroke:#ff9008}.r{stroke:#f82808}.i{stroke:#6a10ff}

.right{overflow:hidden}
.type-row{height:25px;flex:none;margin-top:6px;display:flex;align-items:center;padding-left:2px}
.type-lb{width:43px}
.combo{width:138px;height:25px;background:linear-gradient(#fafafa,#ebe8e4);border:1px solid #aeaba6;border-radius:3px;display:flex;align-items:center;padding:0 8px 0 5px}
.zero{width:79px;height:25px;margin-left:6px}
.tree.small{height:764px;margin-top:8px;background-position:134px 0;border-width:1px 0 1px 1px}
.small .row{grid-template-columns:134px 1fr;height:17px;line-height:17px}
.small .val{padding-left:3px}
.v1{padding-left:43px}
.v0{padding-left:6px;gap:7px}
.vexp{padding-left:27px}
.vexp .tri{margin-right:11px}
.right-btns{margin:6px 0 0 2px;gap:6px}
.right-btns .btn{width:85px;height:25px}

.time-title{height:22px}
.time-row{height:32px;flex:none;padding:7px 0 0 11px;display:flex;align-items:flex-start;position:relative;font-size:14.200px}
.time-row label{line-height:26px;flex:none;width:76px}
.time-row label:nth-of-type(2){width:96px}
.time-row label:nth-of-type(3){width:77px}
.time-row label:nth-of-type(4){width:96px}
.field{width:142px;height:25px;background:#fff;border:1px solid #bdbab5;border-radius:2px;line-height:23px;padding-left:3px;margin-right:6px}
.exp{margin-left:auto;margin-right:17px;display:flex;align-items:center;gap:5px;height:26px}
.exp .cb{margin-left:0}
.status{height:26px;flex:none;margin-top:10px;display:flex;align-items:center;padding:0 2px;font-size:14.200px}
.reset{width:52px;height:26px}
.help{margin-left:7px;white-space:nowrap;position:relative;top:-1px}
.fps{margin-left:auto}
```
